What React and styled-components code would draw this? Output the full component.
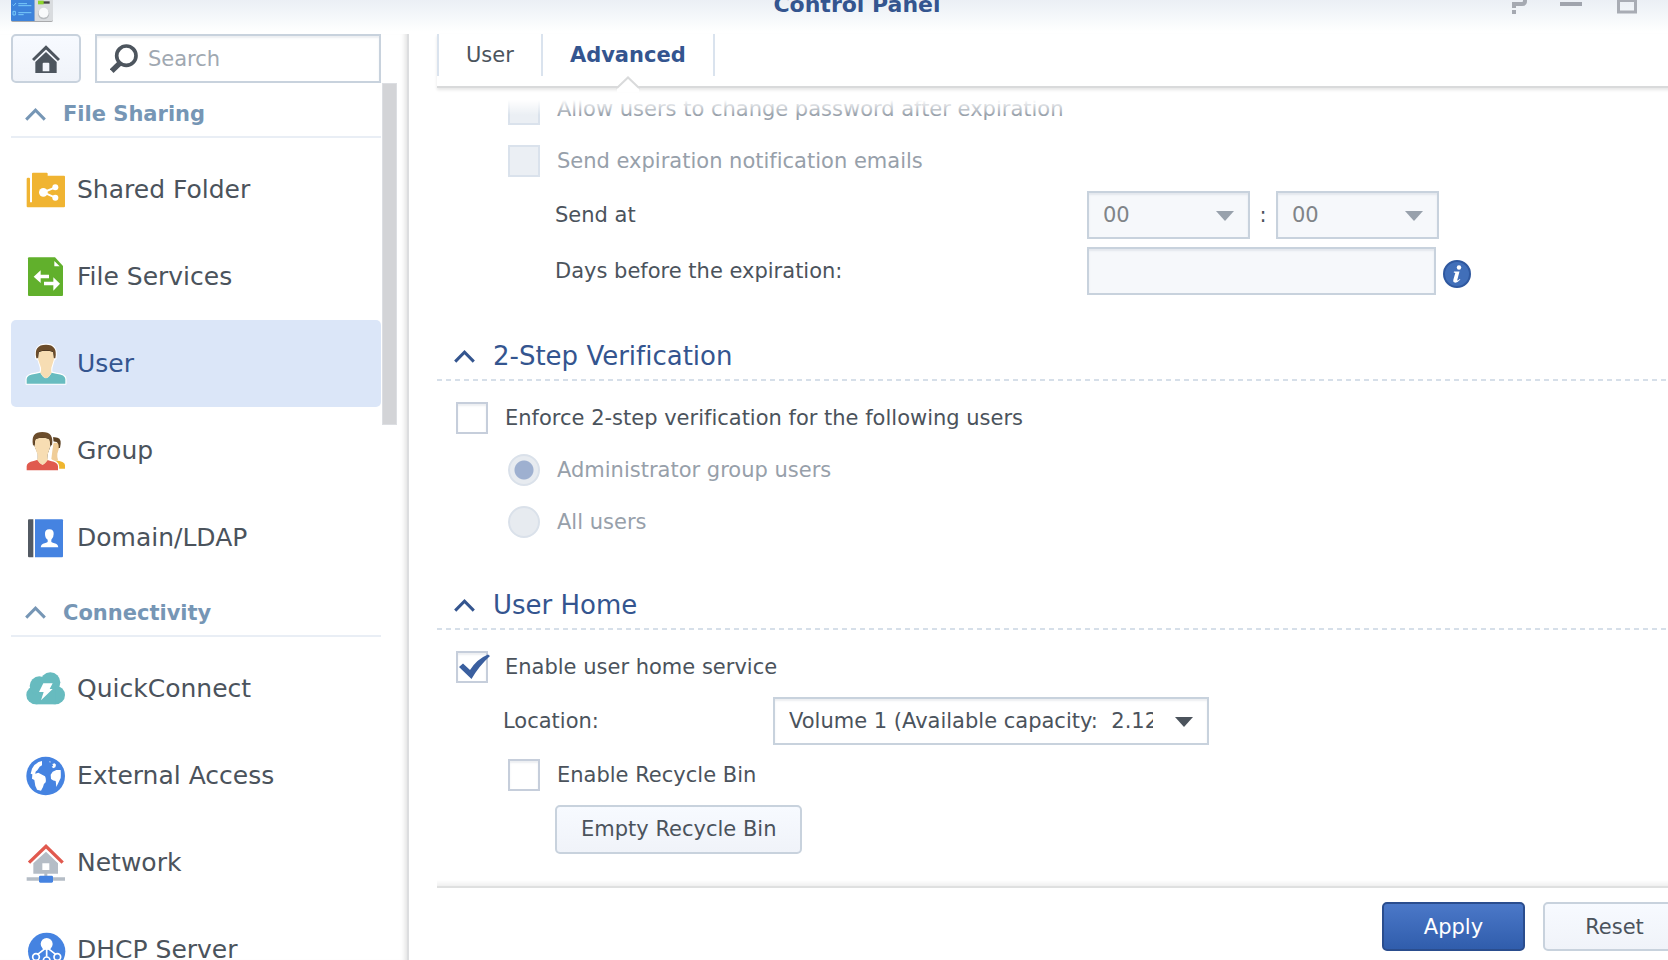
import React from "react";
import styled, { createGlobalStyle, css } from "styled-components";

const color = {
  text: "#4b535c",
  muted: "#97a0aa",
  navy: "#34558f",
  steel: "#7696b5",
  line: "#c8d2dd",
};

const GlobalStyle = createGlobalStyle`
  *, *::before, *::after { box-sizing: border-box; }
  html, body { margin: 0; height: 100%; overflow: hidden; background: #fff; }
  body, button, input, select {
    font-family: Verdana, "DejaVu Sans", sans-serif;
    font-size: 21px;
    line-height: 24px;
    font-variant-ligatures: none;
    color: ${color.text};
  }
`;

/* The window is wider than the viewport; its right edge runs off screen. */
const Window = styled.div`
  display: flex;
  flex-direction: column;
  width: calc(100% + 46px);
  height: 100vh;
  overflow: hidden;
`;

const TitleBar = styled.header`
  flex: none;
  display: grid;
  grid-template-columns: 1fr auto 1fr;
  grid-template-rows: 34px;
  align-items: end;
  height: 34px;
  overflow: hidden;
  background: linear-gradient(#ebeff5, #f4f7fa 16px, #fff 32px);
`;

const AppIcon = styled.svg`
  width: 42px;
  height: 42px;
  margin: 0 0 12px 11px;
`;

const Title = styled.h1`
  margin: 0 0 17px;
  font-size: 22px;
  line-height: 24px;
  color: ${color.navy};
`;

const WindowControls = styled.div`
  display: flex;
  justify-content: flex-end;
  padding: 0 3px 17px 0;
`;

const WindowButton = styled.button`
  display: flex;
  justify-content: center;
  width: 56px;
  height: 24px;
  padding: 0;
  border: 0;
  background: none;
  svg { width: 24px; height: 24px; }
`;

const Body = styled.div`
  flex: 1;
  display: flex;
  min-height: 0;
`;

const Sidebar = styled.aside`
  flex: none;
  display: flex;
  flex-direction: column;
  width: 409px;
  padding-left: 11px;
  border-right: 2px solid #dcdddf;
  box-shadow: inset -6px 0 5px -4px rgba(0, 0, 0, 0.12);
`;

const SearchRow = styled.div`
  flex: none;
  display: flex;
  gap: 14px;
  height: 49px;
  padding-right: 26px;
`;

const buttonFace = css`
  border: 2px solid ${color.line};
  border-radius: 5px;
  background: linear-gradient(#f7faff, #f0f3f9);
`;

const HomeButton = styled.button`
  ${buttonFace}
  display: flex;
  align-items: center;
  justify-content: center;
  width: 70px;
  svg { flex: none; width: 28px; height: 28px; }
`;

const SearchBox = styled.label`
  flex: 1;
  display: flex;
  align-items: center;
  gap: 10px;
  min-width: 0;
  padding-left: 13px;
  border: 2px solid ${color.line};
  box-shadow: inset 0 2px 2px rgba(70, 90, 120, 0.1);
  svg { flex: none; width: 28px; height: 29px; }
`;

const SearchInput = styled.input`
  flex: 1;
  min-width: 0;
  padding: 0;
  border: 0;
  outline: 0;
  background: none;
  &::placeholder { color: #a0a8b1; opacity: 1; }
`;

const SidebarScroll = styled.div`
  flex: 1;
  display: flex;
  gap: 1px;
  min-height: 0;
  overflow: hidden;
`;

const Nav = styled.nav`
  width: 370px;
`;

const ScrollThumb = styled.div`
  width: 15px;
  height: 342px;
  border: 1px solid #dcdee2;
  background: #d3d4d7;
`;

const GroupToggle = styled.button`
  display: flex;
  align-items: center;
  gap: 17px;
  width: 100%;
  height: 55px;
  margin-bottom: 8px;
  padding: 9px 14px 0;
  border: 0;
  border-bottom: 2px solid #e9eef5;
  background: none;
  font-weight: bold;
  color: ${color.steel};
  &:not(:first-child) { height: 56px; }
`;

const NavItem = styled.a`
  display: flex;
  align-items: center;
  gap: 11px;
  height: 87px;
  padding-left: 15px;
  border-radius: 5px;
  font-size: 25px;
  line-height: 32px;
  text-decoration: none;
  color: ${(p) => (p.$active ? color.navy : color.text)};
  background: ${(p) => (p.$active ? "#dbe6f8" : "none")};
  svg { width: 40px; height: 40px; overflow: visible; }
`;

const ChevronIcon = styled.svg`
  flex: none;
  width: 21px;
  height: 13px;
  fill: none;
  stroke: currentColor;
  stroke-width: 3;
`;

const Main = styled.main`
  flex: 1;
  display: flex;
  flex-direction: column;
  min-width: 0;
  margin-left: 28px;
`;

const TabBar = styled.div`
  flex: none;
  position: relative;
  z-index: 2;
  display: flex;
  align-items: flex-start;
  height: 54px;
  border-bottom: 2px solid #d9dadb;
  box-shadow: 0 2px 3px rgba(0, 0, 0, 0.1);
  background: #fff;
`;

const Tab = styled.button`
  position: relative;
  height: 42px;
  padding: 0 27px;
  border: 0;
  border-left: 2px solid #dae3ee;
  background: none;
  color: ${(p) => (p.$active ? color.navy : color.text)};
  font-weight: ${(p) => (p.$active ? "bold" : "normal")};
  &:last-of-type { border-right: 2px solid #dae3ee; }
`;

const Notch = styled.svg`
  position: absolute;
  top: 42px;
  left: calc(50% - 12px);
  width: 24px;
  height: 16px;
`;

/* Form pane, scrolled to its end; rows fade out under the tab bar. */
const FormPane = styled.form`
  flex: 1;
  position: relative;
  display: flex;
  flex-direction: column;
  justify-content: flex-end;
  min-height: 0;
  overflow: hidden;
  padding-bottom: 29px;
  border-bottom: 2px solid #dfe0e0;
  &::before {
    content: "";
    position: absolute;
    inset: 0 0 auto;
    z-index: 1;
    height: 27px;
    background: linear-gradient(#fff 12px, rgba(255, 255, 255, 0));
  }
  &::after {
    content: "";
    position: absolute;
    inset: auto 0 0;
    height: 6px;
    background: linear-gradient(rgba(0, 0, 0, 0), rgba(0, 0, 0, 0.06));
  }
`;

const SectionToggle = styled.button`
  flex: none;
  display: flex;
  align-items: center;
  gap: 18px;
  height: 48px;
  margin: 34px 0 11px;
  padding: 0 17px 2px;
  border: 0;
  background: repeating-linear-gradient(90deg, #d6dfe9 0 5px, #fff 5px 9px) bottom / 100% 2px no-repeat;
  font-size: 26px;
  line-height: 32px;
  color: ${color.navy};
`;

const CheckRow = styled.label`
  flex: none;
  display: flex;
  align-items: center;
  gap: 17px;
  height: 52px;
  padding-left: ${(p) => (p.$nested ? 71 : 19)}px;
  color: ${(p) => (p.$disabled ? color.muted : color.text)};
`;

const BoxWrap = styled.span`
  position: relative;
  width: 32px;
  height: 32px;
  svg {
    position: absolute;
    top: 3px;
    left: 2px;
    width: 32px;
    height: 26px;
    pointer-events: none;
  }
`;

const BoxInput = styled.input`
  appearance: none;
  display: block;
  width: 32px;
  height: 32px;
  margin: 0;
  border: 2px solid #c6cedb;
  background: #fff;
  box-shadow: inset 0 2px 2px rgba(70, 90, 120, 0.1);
  &:disabled { border-color: #dae2ec; background: #ebeff4; box-shadow: none; }
`;

const RadioInput = styled.input`
  appearance: none;
  width: 32px;
  height: 32px;
  margin: 0;
  border: 2px solid #dae1ea;
  border-radius: 50%;
  background: #e7ebf0;
  &:checked { background: radial-gradient(circle, #9eb0d0 9px, #e7ebf0 10px); }
`;

const FieldRow = styled.div`
  flex: none;
  display: flex;
  align-items: center;
  height: 56px;
  padding-left: ${(p) => (p.$deep ? 118 : 66)}px;
`;

const FieldLabel = styled.label`
  flex: none;
  width: ${(p) => (p.$wide ? 532 : 270)}px;
`;

const Combo = styled.span`
  position: relative;
  width: ${(p) => (p.$wide ? 436 : 163)}px;
  height: 48px;
  svg {
    position: absolute;
    right: 16px;
    top: 20px;
    width: 18px;
    height: 10px;
    fill: ${color.text};
    pointer-events: none;
  }
  select:disabled + svg { fill: #98a1ac; }
`;

const field = css`
  height: 48px;
  border: 2px solid ${color.line};
  border-radius: 0;
  background: #fff;
  box-shadow: inset 0 2px 2px rgba(70, 90, 120, 0.1);
  &:disabled { background: #f6f8fb; color: #808488; opacity: 1; }
`;

const Select = styled.select`
  ${field}
  appearance: none;
  width: 100%;
  padding: 0 54px 0 14px;
  text-overflow: clip;
`;

const Colon = styled.span`
  width: 26px;
  text-align: center;
`;

const DaysInput = styled.input`
  ${field}
  width: 349px;
`;

const InfoIcon = styled.svg`
  width: 28px;
  height: 28px;
  margin: 6px 0 0 7px;
`;

const Button = styled.button`
  ${buttonFace}
  height: 49px;
  padding: 0 24px;
  min-width: 143px;
  ${(p) =>
    p.$primary &&
    css`
      border-color: #2a4d8e;
      background: linear-gradient(#4b78c8, #305dac);
      color: #fff;
    `}
`;

const Footer = styled.footer`
  flex: none;
  display: flex;
  justify-content: flex-end;
  gap: 18px;
  height: 72px;
  padding: 14px 28px 0 0;
`;

const Chevron = () => (
  <ChevronIcon viewBox="0 0 21 13" aria-hidden="true">
    <path d="M1.2 11.6 10.5 2.2l9.3 9.4" />
  </ChevronIcon>
);

const Arrow = () => (
  <svg viewBox="0 0 18 10" aria-hidden="true">
    <path d="M0 0h18L9 10z" />
  </svg>
);

const Icon = ({ children }) => (
  <svg viewBox="0 0 120 120" aria-hidden="true">{children}</svg>
);

const SharedFolderIcon = () => (
  <Icon>
    <path fill="#f0b432" d="M6 23h3q3 0 3 3v71h6V11q0-3 3-3h41q3 0 3 3v6h49q3 0 3 3v89q0 3-3 3H5q-3 0-3-3V27q0-4 4-4z" />
    <path stroke="#fff" strokeWidth="6" fill="none" d="M88 52 52 67l36 16" />
    <g fill="#fff"><circle cx="52" cy="67" r="13" /><circle cx="88" cy="52" r="9" /><circle cx="88" cy="83" r="9" /></g>
  </Icon>
);

const FileServicesIcon = () => (
  <Icon>
    <path fill="#61b02c" d="M9 1h78l24 26v87q0 3-3 3H9q-3 0-3-3V4q0-3 3-3z" />
    <path fill="#fff" d="M85 12v16h16zM23 59l21-19v13h25v11H44v14zM54 74h28V61l20 19-20 21V85H54z" />
  </Icon>
);

const UserIcon = () => (
  <Icon>
    <g stroke="#fff" strokeWidth="7" strokeLinejoin="round">
      <path d="M2 119V105q0-13 28-16l13-3q8 15 17 17 8-2 17-17l13 3q28 3 28 16v14z" />
      <path d="M31 43Q24 2 60 2q35 0 28 41l-5 3-7 25q-1 13 1 15-9 15-17 17-8-2-17-17 3-3 2-15l-8-26z" />
    </g>
    <path fill="#68bcc0" d="M2 119V105q0-13 28-16l13-3q8 15 17 17 8-2 17-17l13 3q28 3 28 16v14z" />
    <path fill="#f7ddb3" d="M38 24q22-7 44 0l2 22-8 25q-1 13 1 15-9 15-17 17-8-2-17-17 3-3 2-15L36 45z" />
    <path fill="#6b4c2b" d="M31 43Q22 2 60 2q36 0 28 41h-4q1-16-5-21-19-5-38 0-6 4-6 21z" />
  </Icon>
);

const GroupIcon = () => (
  <Icon>
    <path fill="#efb62f" d="M88 88q28 3 29 14v11H97z" />
    <path fill="#f0cd98" d="M82 35h19l-1 14-6 19q-1 12 2 18-5 7-8 7L76 84z" />
    <path fill="#5b4021" d="M80 19q26-3 24 19l-2 13h-4q1-13-6-18l-12-2z" />
    <g stroke="#fff" strokeWidth="7" strokeLinejoin="round">
      <path d="M2 118v-12q0-12 21-16l12-4q7 13 14 15 7-2 13-15l12 4q22 4 22 16v12z" />
      <path d="M21 43Q13 3 49 3q36 0 29 40l-10 27-1 15-18 16-17-16V69z" />
    </g>
    <path fill="#e05a4e" d="M2 118v-12q0-12 21-16l12-4q7 13 14 15 7-2 13-15l12 4q22 4 22 16v12z" />
    <path fill="#f7ddb3" d="M28 24q21-7 43 0l2 22-8 25q-1 13 1 15-9 13-17 15-8-2-16-15 3-3 2-15L25 45z" />
    <path fill="#6b4c2b" d="M21 43Q13 3 49 3q36 0 29 40h-5q1-16-6-20-18-5-36 0-6 4-5 20z" />
  </Icon>
);

const DomainIcon = () => (
  <Icon>
    <path fill="#535a63" d="M9 4h13v114H9q-3 0-3-3V7q0-3 3-3z" />
    <path fill="#4583e1" d="M27 4h81q3 0 3 3v108q0 3-3 3H27z" />
    <path fill="#fff" d="M57 48q-1-14 13-14 14 0 13 14 0 12-7 17v7q2 2 14 5 6 2 7 11H44q1-9 7-11 12-3 14-5v-7q-8-5-8-17z" />
  </Icon>
);

const QuickConnectIcon = () => (
  <Icon>
    <g fill="#67bbbf"><circle cx="29" cy="78" r="28" /><circle cx="89" cy="78" r="28" /><circle cx="40" cy="51" r="29" /><circle cx="73" cy="40" r="30" /><path d="M29 50h60v56H29z" /></g>
    <path fill="#fff" d="M52 43h28l-9 17h9L45 94l8-25H39z" />
  </Icon>
);

const ExternalAccessIcon = () => (
  <Icon>
    <circle cx="59" cy="60" r="58" fill="#4583e1" />
    <path fill="#fff" d="M48 15q-20 4-30 23l-4 15 5 2-1 13 7 4 3 18 3 6 2 5 12 3 6-11q0-9 8-14 2-10-2-18l-20-11-9 3q-1-6 6-10l7-11 7-4zM74 56l6-9 11-5h13q1 14 0 24l-13 27q-1-11-2-18-7 0-14-6zM79 24l7-2 4 4-2 8-7 3-4-6h5zM70 15l4 2-2 4z" />
  </Icon>
);

const NetworkIcon = () => (
  <Icon>
    <path fill="none" stroke="#e1594e" strokeWidth="10" d="M9 59 60 10l50 49" />
    <path fill="#b5bdc6" fillRule="evenodd" d="M60 26 96 61v31H64v11h53v10H2v-10h53V92H22V61zM49 61v20h21V61z" />
    <rect x="39" y="98" width="42" height="21" rx="4" fill="#4583e1" />
  </Icon>
);

const DhcpIcon = () => (
  <Icon>
    <circle cx="62" cy="64" r="56" fill="#4583e1" />
    <g fill="none" stroke="#fff" strokeWidth="5"><path d="M62 42v38M62 52 34 74M62 52l28 22" /><circle cx="30" cy="81" r="10" /><circle cx="94" cy="81" r="10" /><circle cx="62" cy="91" r="10" /></g>
    <circle cx="62" cy="42" r="18" fill="#fff" />
  </Icon>
);

const groups = [
  {
    name: "File Sharing",
    items: [
      ["Shared Folder", SharedFolderIcon],
      ["File Services", FileServicesIcon],
      ["User", UserIcon],
      ["Group", GroupIcon],
      ["Domain/LDAP", DomainIcon],
    ],
  },
  {
    name: "Connectivity",
    items: [
      ["QuickConnect", QuickConnectIcon],
      ["External Access", ExternalAccessIcon],
      ["Network", NetworkIcon],
      ["DHCP Server", DhcpIcon],
    ],
  },
];

function CheckField({ nested, disabled, checked, children }) {
  return (
    <CheckRow $nested={nested} $disabled={disabled}>
      <BoxWrap>
        <BoxInput type="checkbox" disabled={disabled} defaultChecked={checked} />
        {checked && (
          <svg viewBox="0 0 32 26" aria-hidden="true">
            <path fill="#3a5f9f" d="M1 13 5 9.500l7 6.500Q19 5 30 .5L32 2Q21 12 13.500 25z" />
          </svg>
        )}
      </BoxWrap>
      {children}
    </CheckRow>
  );
}

function RadioField({ checked, children }) {
  return (
    <CheckRow $nested $disabled>
      <RadioInput type="radio" name="enforce-scope" disabled defaultChecked={checked} />
      {children}
    </CheckRow>
  );
}

function TitleBarContent() {
  return (
    <TitleBar>
      <AppIcon viewBox="0 0 126 126" aria-hidden="true">
        <rect x="0" y="6" width="126" height="120" rx="5" fill="#a9aaac" />
        <path fill="#3d83db" d="M0 6h71v117H4q-4 0-4-4z" />
        <path fill="#d9dcdf" d="M71 6h55v113q0 4-4 4H71z" />
        <path stroke="#79cbfa" strokeWidth="3" fill="none" d="M22 71h26M22 77h39M22 98h39M22 104h16M6 94h7v11H6zM5 74l3 3 7-8" />
        <path fill="#444" d="M96 64h20v7H96z" />
        <path fill="#8dd52c" d="M81 62h17v11H81z" />
        <circle cx="98" cy="101" r="17" fill="#b9bdc0" />
        <circle cx="98" cy="98" r="15" fill="#f8fafb" />
      </AppIcon>
      <Title>Control Panel</Title>
      <WindowControls>
        <WindowButton aria-label="Help">
          <svg viewBox="0 0 24 24"><path fill="none" stroke="#a5a9b1" strokeWidth="4" d="M9 4V1h13v7q0 3-3 3h-8v4M11 17v4" /></svg>
        </WindowButton>
        <WindowButton aria-label="Minimize">
          <svg viewBox="0 0 24 24"><path fill="#a0a4ad" d="M1 9h22v4H1z" /></svg>
        </WindowButton>
        <WindowButton aria-label="Maximize">
          <svg viewBox="0 0 24 24"><path fill="none" stroke="#a8acb4" strokeWidth="3" d="M3.500 3h17v16h-17z" /><path fill="#a8acb4" d="M2 2h20v7H2z" /></svg>
        </WindowButton>
        <WindowButton aria-label="Close">
          <svg viewBox="0 0 24 24"><path fill="none" stroke="#a8acb4" strokeWidth="3" d="m4 2 17 17M21 2 4 19" /></svg>
        </WindowButton>
      </WindowControls>
    </TitleBar>
  );
}

export default function App() {
  return (
    <>
      <GlobalStyle />
      <Window>
        <TitleBarContent />
        <Body>
          <Sidebar>
            <SearchRow>
              <HomeButton aria-label="Home">
                <svg viewBox="0 0 84 84">
                  <path fill="none" stroke="#4d555e" strokeWidth="9" d="M3 45 42 7l39 38" />
                  <path fill="#4d555e" fillRule="evenodd" d="M42 21 74 51v33H10V51zM35 53q-3 0-3 3v23h20V56q0-3-3-3z" />
                </svg>
              </HomeButton>
              <SearchBox>
                <svg viewBox="0 0 84 87" fill="none" stroke="#4d555e" aria-hidden="true">
                  <circle cx="49" cy="35" r="29" strokeWidth="11" />
                  <path strokeWidth="16" d="M5 81 30 57" />
                </svg>
                <SearchInput type="text" placeholder="Search" aria-label="Search" />
              </SearchBox>
            </SearchRow>
            <SidebarScroll>
              <Nav>
                {groups.map((g) => (
                  <React.Fragment key={g.name}>
                    <GroupToggle aria-expanded="true">
                      <Chevron />
                      {g.name}
                    </GroupToggle>
                    {g.items.map(([name, Glyph]) => (
                      <NavItem key={name} href="#" $active={name === "User"}>
                        <Glyph />
                        {name}
                      </NavItem>
                    ))}
                  </React.Fragment>
                ))}
              </Nav>
              <ScrollThumb />
            </SidebarScroll>
          </Sidebar>
          <Main>
            <TabBar>
              <Tab>User</Tab>
              <Tab $active>
                Advanced
                <Notch viewBox="0 0 24 16" aria-hidden="true">
                  <path fill="#fff" d="M1 16v-4L12 1l11 11v4z" />
                  <path fill="none" stroke="#d9dadb" strokeWidth="2" d="M0 11.500h1.500L12 1.500l10.500 10H24" />
                </Notch>
              </Tab>
            </TabBar>
            <FormPane>
              <CheckField nested disabled>Allow users to change password after expiration</CheckField>
              <CheckField nested disabled>Send expiration notification emails</CheckField>
              <FieldRow $deep>
                <FieldLabel $wide htmlFor="send-hour">Send at</FieldLabel>
                <Combo>
                  <Select id="send-hour" disabled><option>00</option></Select>
                  <Arrow />
                </Combo>
                <Colon>:</Colon>
                <Combo>
                  <Select aria-label="Minute" disabled><option>00</option></Select>
                  <Arrow />
                </Combo>
              </FieldRow>
              <FieldRow $deep>
                <FieldLabel $wide htmlFor="days-before">Days before the expiration:</FieldLabel>
                <DaysInput id="days-before" type="text" disabled />
                <InfoIcon viewBox="0 0 28 28" aria-hidden="true">
                  <circle cx="14" cy="14" r="13" fill="#416fb9" stroke="#2f589f" strokeWidth="2" />
                  <circle cx="16" cy="7.500" r="2.200" fill="#fff" />
                  <path fill="#fff" d="M11 11.500h5.500l-2.300 8.800q0 1 2.600-1.400l.6.700q-3 3.400-5.500 3-2.200-.4-1.500-3.200l1.900-6.500-1.600-.4z" />
                </InfoIcon>
              </FieldRow>

              <SectionToggle type="button" aria-expanded="true">
                <Chevron />
                2-Step Verification
              </SectionToggle>
              <CheckField>Enforce 2-step verification for the following users</CheckField>
              <RadioField checked>Administrator group users</RadioField>
              <RadioField>All users</RadioField>

              <SectionToggle type="button" aria-expanded="true">
                <Chevron />
                User Home
              </SectionToggle>
              <CheckField checked>Enable user home service</CheckField>
              <FieldRow>
                <FieldLabel htmlFor="location">Location:</FieldLabel>
                <Combo $wide>
                  <Select id="location"><option>{"Volume 1 (Available capacity:\u00a0 2.12 TB)"}</option></Select>
                  <Arrow />
                </Combo>
              </FieldRow>
              <CheckField nested>Enable Recycle Bin</CheckField>
              <FieldRow $deep>
                <Button type="button">Empty Recycle Bin</Button>
              </FieldRow>
            </FormPane>
            <Footer>
              <Button $primary>Apply</Button>
              <Button>Reset</Button>
            </Footer>
          </Main>
        </Body>
      </Window>
    </>
  );
}
